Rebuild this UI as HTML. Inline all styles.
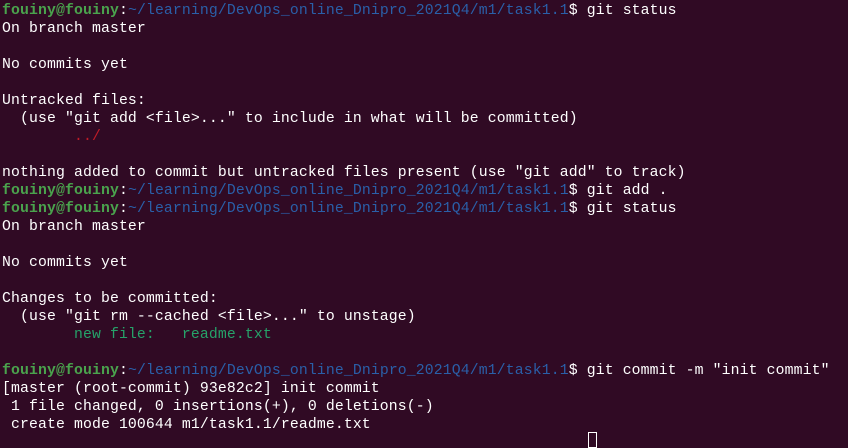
<!DOCTYPE html>
<html><head><meta charset="utf-8"><style>
html,body{margin:0;padding:0;background:#300a24;width:848px;height:436px;overflow:hidden}
pre{margin:0;padding:2px 0 0 2px;font-family:"Liberation Mono",monospace;font-size:14.79px;letter-spacing:0.125px;line-height:18px;color:#ffffff;white-space:pre}
.g{color:#4aa34d;font-weight:bold}
.b{color:#2a5fa8}
.r{color:#c01c28}
.n{color:#26a269}
.cur{position:absolute;left:588px;top:432px;width:9px;height:16px;border:1px solid #fff;box-sizing:border-box}
</style></head><body>
<pre><span class="g">fouiny@fouiny</span>:<span class="b">~/learning/DevOps_online_Dnipro_2021Q4/m1/task1.1</span>$ git status
On branch master

No commits yet

Untracked files:
  (use "git add &lt;file&gt;..." to include in what will be committed)
        <span class="r">../</span>

nothing added to commit but untracked files present (use "git add" to track)
<span class="g">fouiny@fouiny</span>:<span class="b">~/learning/DevOps_online_Dnipro_2021Q4/m1/task1.1</span>$ git add .
<span class="g">fouiny@fouiny</span>:<span class="b">~/learning/DevOps_online_Dnipro_2021Q4/m1/task1.1</span>$ git status
On branch master

No commits yet

Changes to be committed:
  (use "git rm --cached &lt;file&gt;..." to unstage)
        <span class="n">new file:   readme.txt</span>

<span class="g">fouiny@fouiny</span>:<span class="b">~/learning/DevOps_online_Dnipro_2021Q4/m1/task1.1</span>$ git commit -m "init commit"
[master (root-commit) 93e82c2] init commit
 1 file changed, 0 insertions(+), 0 deletions(-)
 create mode 100644 m1/task1.1/readme.txt</pre>
<div class="cur"></div>
</body></html>
